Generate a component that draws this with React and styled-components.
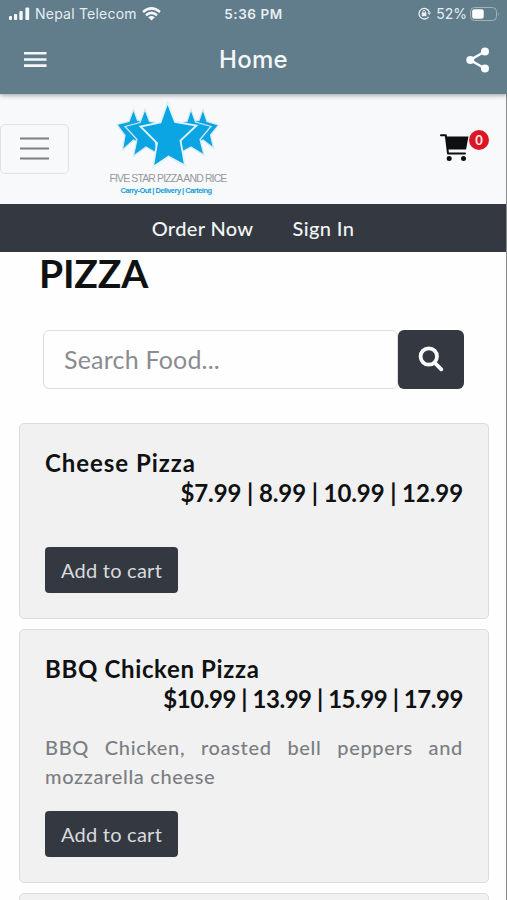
import React from "react";
import styled, { createGlobalStyle } from "styled-components";

const Global = createGlobalStyle`
  * { box-sizing: border-box; }
  html, body { margin: 0; height: 900px; overflow: hidden; background: #fefefe; }
  h1, h2, p { margin: 0; }
  button { font: inherit; }
`;

const Screen = styled.div`
  display: flex;
  flex-direction: column;
  width: 507px;
  height: 900px;
  overflow: hidden;
  background: #fefefe;
  color: #101113;
  font-family: Lato, "Noto Sans", sans-serif;
`;

const AppHeader = styled.header`
  position: relative;
  z-index: 1;
  flex: none;
  height: 94px;
  background: #617c8a;
  box-shadow: 0 1px 5px rgba(0, 0, 0, 0.4);
  color: #f4f8fa;
  font-family: Inter, "Liberation Sans", sans-serif;
`;

const StatusBar = styled.div`
  display: grid;
  grid-template-columns: 1fr auto 1fr;
  align-items: center;
  height: 27px;
  padding: 0 7px 0 8px;
  color: #e6eef2;
`;

const StatusGroup = styled.div`
  display: flex;
  align-items: center;
  justify-content: ${(p) => (p.$end ? "flex-end" : "flex-start")};
  gap: ${(p) => p.$gap}px;
`;

const Carrier = styled.span`
  font-size: 14px;
  letter-spacing: 0.22px;
  line-height: 18px;
`;

const Clock = styled.span`
  margin-right: 1px;
  font-size: 13.5px;
  font-weight: 600;
  line-height: 18px;
  letter-spacing: 0.55px;
`;

const Percent = styled.span`
  margin-left: 2px;
  font-size: 14px;
  line-height: 18px;
`;

const TitleBar = styled.div`
  display: grid;
  grid-template-columns: 1fr auto 1fr;
  align-items: center;
  height: 65px;
  padding: 0 17px 0 24px;

  svg:last-child { justify-self: end; }
`;

const Title = styled.h1`
  margin-right: 7px;
  font-size: 24px;
  font-weight: 500;
  line-height: 30px;
  letter-spacing: 0.3px;
`;

const PageBody = styled.main`
  flex: 1;
  border-right: 1px solid #8b8c8e;
`;

const BrandBar = styled.div`
  display: flex;
  align-items: center;
  height: 110px;
  background: #f7f9fb;
`;

const MenuButton = styled.button`
  display: flex;
  align-items: center;
  justify-content: center;
  width: 69px;
  height: 50px;
  padding: 0 0 1px;
  background: transparent;
  border: 1px solid #dfe1e3;
  border-radius: 5px;
`;

const Brand = styled.div`
  display: flex;
  flex-direction: column;
  align-items: center;
  width: 118px;
  height: 100px;
  margin-left: 40px;
  white-space: nowrap;
  font-family: "Liberation Sans", sans-serif;
`;

const BrandName = styled.span`
  margin-top: 3px;
  color: #96989b;
  font-size: 10.5px;
  line-height: 13px;
  letter-spacing: -0.88px;
`;

const BrandTag = styled.span`
  margin-left: -4px;
  color: #149ed6;
  font-size: 7.5px;
  font-weight: 700;
  line-height: 11px;
  letter-spacing: -0.52px;
`;

const Cart = styled.div`
  position: relative;
  display: flex;
  width: 50px;
  height: 32px;
  margin-left: auto;
  margin-right: 16px;
`;

const Badge = styled.span`
  position: absolute;
  top: -3px;
  right: 1px;
  width: 20px;
  height: 20px;
  border-radius: 50%;
  background: #dc1725;
  color: #fbe9ea;
  font-size: 13px;
  font-weight: 700;
  line-height: 20px;
  text-align: center;
`;

const NavBar = styled.nav`
  display: flex;
  justify-content: center;
  gap: 39px;
  height: 48px;
  background: #343941;
`;

const NavLink = styled.a`
  color: #f3f4f5;
  font-size: 20px;
  font-weight: 500;
  line-height: 49px;
  letter-spacing: ${(p) => p.$spacing}px;
`;

const Heading = styled.h1`
  height: 78px;
  padding-left: 39px;
  font-size: 39px;
  font-weight: 700;
  line-height: 43px;
  letter-spacing: -0.2px;
`;

const SearchRow = styled.form`
  display: flex;
  height: 59px;
  margin: 0 42px 0 43px;
`;

const SearchInput = styled.input`
  flex: 1;
  min-width: 0;
  padding: 0 20px 1px;
  border: 1px solid #dcddde;
  border-radius: 6px;
  outline: 0;
  background: #fefefe;
  font: 400 25px Lato, "Noto Sans", sans-serif;
  letter-spacing: 0.2px;

  &::placeholder { color: #8a8c8f; opacity: 1; }
`;

const SearchButton = styled.button`
  display: flex;
  align-items: center;
  justify-content: center;
  width: 66px;
  padding: 0;
  border: 0;
  border-radius: 6px;
  background: #343941;
`;

const Menu = styled.div`
  display: flex;
  flex-direction: column;
  gap: 10px;
  padding: 34px 17px 0 19px;
`;

const Card = styled.article`
  display: flex;
  flex-direction: column;
  height: ${(p) => p.$height}px;
  padding: 24px 25px;
  border: 1px solid #dadbdb;
  border-radius: 5px;
  background: #f1f1f1;
`;

const FoodName = styled.h2`
  font-size: 24px;
  font-weight: 700;
  line-height: 30px;
  letter-spacing: ${(p) => p.$spacing}px;
`;

const Prices = styled.p`
  font-size: 24px;
  font-weight: 700;
  line-height: 29px;
  text-align: right;
  white-space: nowrap;
  letter-spacing: ${(p) => p.$spacing}px;
`;

const Description = styled.p`
  margin-top: 20px;
  color: #7b7e82;
  font-size: 20px;
  font-weight: 500;
  line-height: 29px;
  letter-spacing: 0.65px;
  text-align: justify;
`;

const AddButton = styled.button`
  flex: none;
  width: 133px;
  height: 46px;
  margin-top: ${(p) => p.$top}px;
  padding: 0;
  border: 0;
  border-radius: 4px;
  background: #343941;
  color: #d9dbde;
  font-size: 20px;
  letter-spacing: 0.25px;
`;

const SignalIcon = () => (
  <svg width="22" height="14" viewBox="0 0 22 14" fill="#f4f8fa">
    <rect x="1" y="9" width="3" height="4" rx="1" />
    <rect x="6" y="7" width="3.2" height="6" rx="1" />
    <rect x="11.3" y="4" width="3.4" height="9" rx="1" />
    <rect x="17.4" y="0.5" width="3.8" height="12.5" rx="1" />
  </svg>
);

const WifiIcon = () => (
  <svg width="19" height="14" viewBox="0 0 19 14" fill="none" stroke="#f4f8fa" strokeWidth="2.5">
    <path d="M1 5 Q9.5 -2.2 18 5" />
    <path d="M4 8.2 Q9.5 3.5 15 8.2" />
    <path d="M6.2 10.2 Q9.5 7.7 12.8 10.2 L9.5 13.6Z" fill="#f4f8fa" stroke="none" />
  </svg>
);

const LockIcon = () => (
  <svg width="13" height="13" viewBox="0 0 13 13" fill="none" stroke="#e6eef2" strokeWidth="1.3">
    <path d="M10.6 9.8A5.3 5.3 0 1 1 11.4 5.2" />
    <path d="M9.4 5.5h3.6l-1.8 2.6z" fill="#e6eef2" stroke="none" />
    <rect x="3.800" y="5.600" width="4.600" height="3.600" rx="0.5" fill="#e6eef2" stroke="none" />
    <path d="M4.800 6V4.700a1.300 1.300 0 0 1 2.600 0V6" strokeWidth="0.9" />
  </svg>
);

const BatteryIcon = () => (
  <svg width="30" height="14" viewBox="0 0 30 14">
    <rect x="0.5" y="0.5" width="26" height="13" rx="4" fill="none" stroke="#a2b2bb" />
    <rect x="2.2" y="2.2" width="11.5" height="9.6" rx="2" fill="#fff" />
    <path d="M28 4.5q1.6 2.5 0 5z" fill="#a2b2bb" />
  </svg>
);

const DrawerIcon = () => (
  <svg width="23" height="17" viewBox="0 0 23 17" stroke="#f4f8fa" strokeWidth="2.6">
    <path d="M0 2.3h22.5M0 8.5h22.5M0 14.6h22.5" />
  </svg>
);

const ShareIcon = () => (
  <svg width="24" height="26" viewBox="0 0 24 26" fill="#fbfdfe">
    <path d="M19 4.500L4 13l15 8.500" fill="none" stroke="#fbfdfe" strokeWidth="2.400" />
    <circle cx="19" cy="4.500" r="4" />
    <circle cx="4.300" cy="13" r="4" />
    <circle cx="19" cy="21.500" r="4" />
  </svg>
);

const NavbarIcon = () => (
  <svg width="29" height="23" viewBox="0 0 29 23" stroke="#7d7f80" strokeWidth="2.2">
    <path d="M0 1.5h29M0 11.5h29M0 21.5h29" />
  </svg>
);

const StarsLogo = () => (
  <svg width="118" height="70" viewBox="109 99 118 70">
    <g fill="#0ba5e3" stroke="#d4e9f2" strokeWidth="1.2">
      <path d="M133.500 109.500L137.500 120.500L148 122L140 132L143 144L133.500 140L122.500 150L125 135.500L117 124.500L129 121.500Z" />
      <path d="M203 109.500L199 120.500L188 122L196 132L193 144L203 140L213.500 148L210.500 135L218.500 125L207 121.500Z" />
      <path d="M145 109.500L149.500 121.500L165 124L154 136L158 154L146 147L133.500 156L137 139.500L125 126.500L140 122.500Z" />
      <path d="M191 109.500L187 121.500L172 124L182 136L178 154L191 147L204 155L200 139.500L211 126.500L195.500 122Z" />
    </g>
    <path d="M167.500 102.500L175 122L196.500 125.500L180.500 140.500L185 165.500L168.500 156.500L153 167L157 143L140.500 126.500L160.500 122.500Z" fill="#0ba5e3" stroke="#dff3fb" strokeWidth="1.8" />
  </svg>
);

const CartIcon = () => (
  <svg width="31" height="29" viewBox="0 0 31 29" fill="#0d0f11">
    <path d="M1 2.200h4.800l2.200 18.300h17" fill="none" stroke="#0d0f11" strokeWidth="2" strokeLinejoin="round" strokeLinecap="round" />
    <path d="M5.500 3.500h23l-2.500 13H7.500z" />
    <circle cx="9.200" cy="25.500" r="2.500" />
    <circle cx="23.500" cy="25.500" r="2.500" />
  </svg>
);

const SearchIcon = () => (
  <svg width="26" height="27" viewBox="0 0 26 27" fill="none" stroke="#fafbfb" strokeWidth="3.8">
    <circle cx="10.800" cy="10.500" r="8.200" />
    <path d="M16.800 16.800l6.500 6.500" strokeLinecap="round" />
  </svg>
);

export default function App() {
  return (
    <>
      <Global />
      <Screen>
        <AppHeader>
          <StatusBar>
            <StatusGroup $gap={5}>
              <SignalIcon />
              <Carrier>Nepal Telecom</Carrier>
              <WifiIcon />
            </StatusGroup>
            <Clock>5:36 PM</Clock>
            <StatusGroup $end $gap={3}>
              <LockIcon />
              <Percent>52%</Percent>
              <BatteryIcon />
            </StatusGroup>
          </StatusBar>
          <TitleBar>
            <DrawerIcon />
            <Title>Home</Title>
            <ShareIcon />
          </TitleBar>
        </AppHeader>
        <PageBody>
          <BrandBar>
            <MenuButton aria-label="Menu"><NavbarIcon /></MenuButton>
            <Brand>
              <StarsLogo />
              <BrandName>FIVE STAR PIZZA AND RICE</BrandName>
              <BrandTag>Carry-Out | Delivery | Carteing</BrandTag>
            </Brand>
            <Cart>
              <CartIcon />
              <Badge>0</Badge>
            </Cart>
          </BrandBar>
          <NavBar>
            <NavLink $spacing={0.35}>Order Now</NavLink>
            <NavLink $spacing={0.4}>Sign In</NavLink>
          </NavBar>
          <Heading>PIZZA</Heading>
          <SearchRow>
            <SearchInput placeholder="Search Food..." />
            <SearchButton type="button" aria-label="Search"><SearchIcon /></SearchButton>
          </SearchRow>
          <Menu>
            <Card $height={196}>
              <FoodName $spacing={0.95}>Cheese Pizza</FoodName>
              <Prices $spacing={-0.1}>$7.99 | 8.99 | 10.99 | 12.99</Prices>
              <AddButton $top={40}>Add to cart</AddButton>
            </Card>
            <Card $height={254}>
              <FoodName $spacing={0.65}>BBQ Chicken Pizza</FoodName>
              <Prices $spacing={-0.45}>$10.99 | 13.99 | 15.99 | 17.99</Prices>
              <Description>BBQ Chicken, roasted bell peppers and mozzarella cheese</Description>
              <AddButton $top={20}>Add to cart</AddButton>
            </Card>
            <Card $height={196} />
          </Menu>
        </PageBody>
      </Screen>
    </>
  );
}
